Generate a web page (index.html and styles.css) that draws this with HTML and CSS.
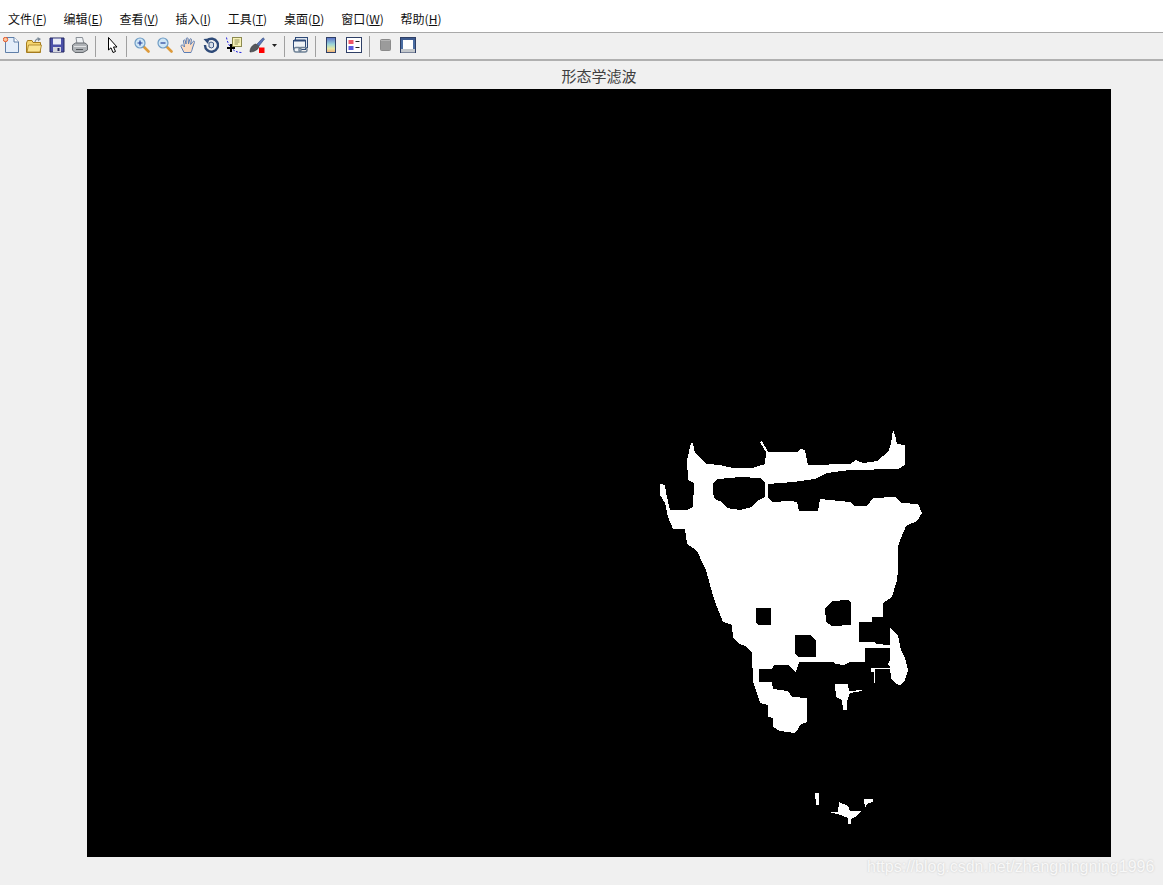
FILE: index.html
```html
<!DOCTYPE html>
<html lang="zh-CN">
<head>
  <meta charset="UTF-8">
  <meta name="viewport" content="width=device-width, initial-scale=1.0">
  <title>形态学滤波</title>
  <link rel="stylesheet" href="styles.css">
</head>
<body>
  <nav class="menubar">
    <span class="menu-item">文件(<u>F</u>)</span>
    <span class="menu-item">编辑(<u>E</u>)</span>
    <span class="menu-item">查看(<u>V</u>)</span>
    <span class="menu-item">插入(<u>I</u>)</span>
    <span class="menu-item">工具(<u>T</u>)</span>
    <span class="menu-item">桌面(<u>D</u>)</span>
    <span class="menu-item">窗口(<u>W</u>)</span>
    <span class="menu-item">帮助(<u>H</u>)</span>
  </nav>

  <div class="toolbar">
    <!-- new -->
    <svg class="tool" viewBox="0 0 16 16">
      <path d="M2.5 0.5H11L15.5 5V15.5H2.5Z" fill="#e4eefa" stroke="#5f7fa8"/>
      <path d="M11 0.5V5H15.5" fill="#fff" stroke="#5f7fa8"/>
      <circle cx="2.5" cy="2.5" r="2.2" fill="#f9c9a0" stroke="#e8582a"/>
    </svg>
    <!-- open -->
    <svg class="tool" viewBox="0 0 16 16">
      <path d="M9 5C9.5 2.5 11 1.5 13 2" fill="none" stroke="#7b8a99" stroke-width="1.2"/>
      <path d="M11.5 0L15 2L12 4.5Z" fill="#7b8a99"/>
      <path d="M0.5 6L1.5 3.5H6L7 5.5H14.5V15.5H0.5Z" fill="#f6d66f" stroke="#a67c1e"/>
      <path d="M1 15L2.5 8H15.5L14 15Z" fill="#fbe592" stroke="#a67c1e" stroke-width=".8"/>
    </svg>
    <!-- save -->
    <svg class="tool" viewBox="0 0 16 16">
      <path d="M1 1H15V15H1Z" fill="#4a50a8" stroke="#23265f"/>
      <rect x="4" y="1.5" width="8" height="6" fill="#e9ecf6"/>
      <rect x="4" y="10" width="8" height="5" fill="#d5d7de"/>
      <rect x="8.5" y="11" width="2" height="3" fill="#23265f"/>
    </svg>
    <!-- print -->
    <svg class="tool" viewBox="0 0 16 16">
      <path d="M4 0.5H10.5L12 7H5Z" fill="#eef1f4" stroke="#8a9097"/>
      <path d="M0.5 8L3.5 6H13L15.5 8V13L11 15.5H3L0.5 13Z" fill="#aeb2b6" stroke="#666b70"/>
      <path d="M2 9.5H14" stroke="#e2e4e6"/>
      <path d="M4 12.5H11" stroke="#55595d"/>
    </svg>
    <i class="sep"></i>
    <!-- arrow -->
    <svg class="tool" viewBox="0 0 16 16">
      <path d="M5.5 0.5V13L8 10.8L10 15.5L12.5 14.5L10.5 10H14Z" fill="#fff" stroke="#000" stroke-linejoin="round"/>
    </svg>
    <i class="sep"></i>
    <!-- zoom in -->
    <svg class="tool" viewBox="0 0 16 16">
      <path d="M9.5 9.5L14.5 14.5" stroke="#dd9a3a" stroke-width="2.6" stroke-linecap="round"/>
      <circle cx="6" cy="6" r="5" fill="#cfe6f6" stroke="#6f9cc4" stroke-width="1.2"/>
      <path d="M3.5 6H8.5M6 3.5V8.5" stroke="#23409a" stroke-width="1.2"/>
    </svg>
    <!-- zoom out -->
    <svg class="tool" viewBox="0 0 16 16">
      <path d="M9.5 9.5L14.5 14.5" stroke="#dd9a3a" stroke-width="2.6" stroke-linecap="round"/>
      <circle cx="6" cy="6" r="5" fill="#cfe6f6" stroke="#6f9cc4" stroke-width="1.2"/>
      <path d="M3.5 6H8.5" stroke="#23409a" stroke-width="1.2"/>
    </svg>
    <!-- pan -->
    <svg class="tool" viewBox="0 0 16 16">
      <path d="M4 15.5L1 9.5C0.5 8 2.5 7.5 3.5 8.8L4.5 10L3.5 4C3.3 2.8 5 2.5 5.3 3.8L6 7L6.3 1.7C6.4 0.5 8 0.5 8.1 1.7L8.5 7L9.8 2.3C10.2 1.2 11.7 1.7 11.4 2.9L10.6 7.5L13 4.5C13.8 3.6 15 4.5 14.4 5.5L12.5 11C12.2 13 11.5 14 11 15.5Z" fill="#fbdcc2" stroke="#5a7db5"/>
    </svg>
    <!-- rotate -->
    <svg class="tool" viewBox="0 0 16 16">
      <path d="M4 3.5A6.5 6.5 0 1 1 2 8" fill="none" stroke="#2e4a78" stroke-width="2.4"/>
      <path d="M0.5 2L6.5 1.5L5 7Z" fill="#2e4a78"/>
      <path d="M6 6L8 5L10.5 6V10L8.5 11L6 10Z" fill="#d7dfe9" stroke="#2e4a78" stroke-width=".9"/>
    </svg>
    <!-- data cursor -->
    <svg class="tool" viewBox="0 0 16 16">
      <path d="M0.5 0.5C1.5 6 4 11 9 14C11 15 13 15.5 15.5 15.5" fill="none" stroke="#2222dd" stroke-dasharray="2 1.5"/>
      <rect x="6.5" y="0.5" width="9" height="9" fill="#f8f3b8" stroke="#8c8a50"/>
      <path d="M8.5 3H13.5M8.5 5H13.5M8.5 7H12" stroke="#77764a" stroke-width=".8"/>
      <path d="M1 11H9M5 7V15" stroke="#000" stroke-width="2"/>
    </svg>
    <!-- brush -->
    <svg class="tool" viewBox="0 0 16 16">
      <path d="M8 7L14 0.8L15.5 2L10 9Z" fill="#5c74b8" stroke="#2e4a78" stroke-width=".6"/>
      <path d="M1 15C1 11 3.5 7.5 7 7L10 9.5C9.5 12.5 5 15 1 15Z" fill="#55585c" stroke="#2b2d30" stroke-width=".6"/>
      <rect x="10" y="10.5" width="5.5" height="5.5" fill="#f00"/>
    </svg>
    <svg class="tool-drop" viewBox="0 0 5 3">
      <path d="M0 0H5L2.5 3Z" fill="#222"/>
    </svg>
    <i class="sep"></i>
    <!-- link -->
    <svg class="tool" viewBox="0 0 16 16">
      <rect x="3.5" y="0.5" width="12" height="10" fill="#dfe6ee" stroke="#2e4a78"/>
      <rect x="1.5" y="3.5" width="12" height="9" fill="#eef2f6" stroke="#2e4a78"/>
      <path d="M2 3.5H13.5" stroke="#2e4a78" stroke-width="2"/>
      <rect x="2" y="10.5" width="7" height="4.5" rx="2" fill="#eef2f6" stroke="#6f8296" stroke-width="1.4"/>
      <rect x="7" y="10.5" width="8" height="4.5" rx="2" fill="none" stroke="#6f8296" stroke-width="1.4"/>
    </svg>
    <i class="sep"></i>
    <!-- colorbar -->
    <svg class="tool" viewBox="0 0 16 16">
      <defs>
        <linearGradient id="cbar" x1="0" y1="0" x2="0" y2="1">
          <stop offset="0" stop-color="#5a6fc8"/>
          <stop offset=".45" stop-color="#9ad5d8"/>
          <stop offset=".75" stop-color="#e8e8a0"/>
          <stop offset="1" stop-color="#f0a878"/>
        </linearGradient>
      </defs>
      <rect x="3.5" y="0.5" width="9" height="15" fill="url(#cbar)" stroke="#2e3f66"/>
    </svg>
    <!-- legend -->
    <svg class="tool" viewBox="0 0 16 16">
      <rect x="0.5" y="0.5" width="15" height="15" fill="#fff" stroke="#2e3f66"/>
      <rect x="2.5" y="3" width="5" height="4" fill="#ee5566"/>
      <rect x="2.5" y="9" width="5" height="4" fill="#5c5ce0"/>
      <path d="M9.5 4.5H13.5M9.5 10.5H13.5" stroke="#222"/>
    </svg>
    <i class="sep"></i>
    <!-- plot browser -->
    <svg class="tool" viewBox="0 0 16 16">
      <rect x="3.5" y="2.5" width="10" height="11" rx="1" fill="#9b9b9b" stroke="#8a8a8a"/>
      <path d="M4 3.5H13" stroke="#b5b5b5"/>
    </svg>
    <!-- plot tools -->
    <svg class="tool" viewBox="0 0 16 16">
      <rect x="0.5" y="0.5" width="15" height="15" fill="#fff" stroke="#2e3f66"/>
      <path d="M1 2H15" stroke="#3d5a8e" stroke-width="2"/>
      <rect x="1" y="3" width="2" height="12" fill="#4b6ea3"/>
      <rect x="13" y="3" width="2" height="12" fill="#4b6ea3"/>
      <rect x="1" y="12" width="14" height="3.5" fill="#c4c8cc"/>
    </svg>
  </div>

  <main class="figure">
    <h1 class="plot-title">形态学滤波</h1>
    <svg class="plot" viewBox="87 89 1024 768" width="1024" height="768">
      <g fill="#fff">
        <path d="M660 484L665 485L666 493L670 510L687 510L693 507L694 483L688 480L687 460L691 443L693 443L695 453L707 464L720 465L733 468L753 468L765 464L766 452L760 442L762 441L768 452L797 452L800 449L805 450L808 465L850 464L856 460L863 463L877 461L888 452L891 444L893 429L895 435L897 444L905 445L905 465L898 469L850 470L827 473L815 479L793 482L768 484L768 497L772 502L790 501L797 502L799 511L818 511L820 499L850 502L855 506L867 506L873 498L895 497L901 503L918 504L922 513L917 521L906 526L901 538L898 546L898 570L897 580L892 597L883 603L883 617L872 617L872 622L859 622L859 642L875 642L876 644L890 645L890 628L898 635L901 650L905 658L908 670L905 680L900 685L896 684L891 678L890 667L888 664L890 660L890 648L865 648L865 662L850 662L844 665L835 664L833 662L799 662L796 672L788 665L774 665L772 669L759 669L759 682L772 682L773 689L788 691L792 697L807 698L807 722L800 725L797 731L794 733L780 731L773 727L773 718L768 717L768 705L760 703L757 693L753 682L752 653L745 646L738 643L733 638L732 625L723 622L715 602L712 592L706 570L702 562L698 553L693 548L687 544L685 529L673 529L668 517L665 503L660 495Z"/>
        <path d="M835 684L848 684L849 691L862 690L862 691L850 693L847 702L847 710L843 710L842 700L836 697Z"/>
        <path d="M871 668L890 668L890 669L875 669L875 683L874 683L874 672L871 672Z"/>
        <path d="M815 793L819 793L819 805L816 805Z"/>
        <path d="M839 802L848 806L850 811L862 811L855 817L851 819L851 824L848 824L848 818L838 814L831 813L831 812L838 812Z"/>
        <path d="M864 799L873 799L873 802L868 803L865 808Z"/>
      </g>
      <g fill="#000">
        <path d="M713 483L718 479L740 477L760 478L765 482L765 497L757 501L752 507L740 510L727 508L722 502L715 499L713 493Z"/>
        <path d="M756 608L771 608L771 625L758 625L756 623Z"/>
        <path d="M832 601L848 600L851 603L851 625L832 626L826 622L825 608Z"/>
        <path d="M795 635L810 635L816 641L816 657L798 657L795 653Z"/>
      </g>
    </svg>
  </main>

  <div class="watermark">https://blog.csdn.net/zhangningning1996</div>
</body>
</html>
```

FILE: styles.css
```css
html, body {
  margin: 0;
  padding: 0;
}
body {
  position: relative;
  height: 885px;
  overflow: hidden;
  background-color: #f0f0f0;
  font-family: "Noto Sans CJK SC", "Liberation Sans", sans-serif;
}
.menubar {
  display: flex;
  gap: 16.8px;
  height: 33px;
  padding-left: 8px;
  align-items: center;
  padding-top: 5px;
  box-sizing: border-box;
  background-color: #fff;
  border-bottom: 1px solid #a9a9a9;
  font-size: 12px;
  color: #111;
}
.toolbar {
  display: flex;
  align-items: center;
  gap: 7px;
  height: 28px;
  padding-left: 3px;
  padding-bottom: 2px;
  box-sizing: border-box;
  border-bottom: 2px solid #b0b0b0;
}
.tool {
  width: 16px;
  height: 16px;
  flex: none;
}
.tool-drop {
  width: 5px;
  height: 3px;
  flex: none;
}
.sep {
  width: 1px;
  height: 21px;
  margin-top: 3px;
  flex: none;
  background-color: #a0a0a0;
}
.figure {
  width: 1024px;
  margin-left: 87px;
}
.plot-title {
  margin: 0;
  height: 28px;
  padding-top: 5px;
  box-sizing: border-box;
  text-align: center;
  font-size: 15px;
  font-weight: normal;
  line-height: 20px;
  color: #404040;
}
.plot {
  display: block;
  background-color: #000;
  shape-rendering: crispEdges;
}
.watermark {
  position: absolute;
  left: 867px;
  top: 857px;
  font-family: "Liberation Sans", sans-serif;
  font-size: 16px;
  line-height: 20px;
  color: #f8f8f8;
  text-shadow: 0 0 2px #c4c4c4;
  white-space: nowrap;
}
```
